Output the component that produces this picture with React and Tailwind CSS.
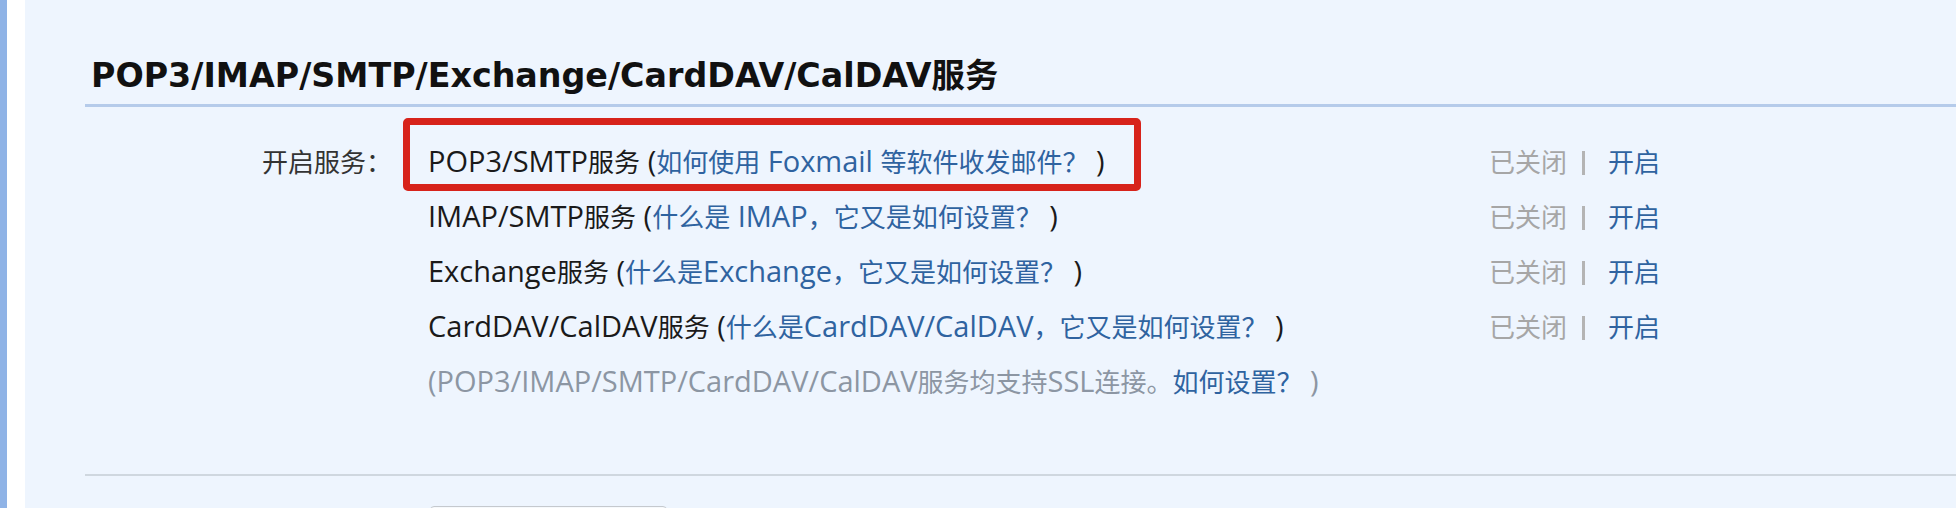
const services = [
  {
    name: "POP3/SMTP服务",
    help: "如何使用 Foxmail 等软件收发邮件？",
  },
  {
    name: "IMAP/SMTP服务",
    help: "什么是 IMAP，它又是如何设置？",
  },
  {
    name: "Exchange服务",
    help: "什么是Exchange，它又是如何设置？",
  },
  {
    name: "CardDAV/CalDAV服务",
    help: "什么是CardDAV/CalDAV，它又是如何设置？",
  },
];

// latin runs get a slightly bigger humanist face, like YaHei's Segoe part
const Mixed = ({ text }) =>
  text
    .split(/([\x20-\x7E]+)/)
    .filter(Boolean)
    .map((part, i) =>
      /^[\x20-\x7E]+$/.test(part) ? (
        <span key={i} className="font-['Open_Sans',sans-serif] text-[29px]">
          {part}
        </span>
      ) : (
        <span key={i}>{part}</span>
      )
    );

const App = () => {
  return (
    <div className="flex w-[1956px] h-[508px] overflow-hidden bg-[#eef5fe] text-[26px] font-['Noto_Sans_CJK_SC',sans-serif]">
      {/* left rail */}
      <div className="w-[7px] shrink-0 bg-[#8fb3e6]" />
      <div className="w-[18px] shrink-0 bg-white" />

      <div className="flex-1 pl-[60px]">
        {/* section title */}
        <div className="pt-[56px] pb-[8px] border-b-[3px] border-[#b5cbea]">
          <h2 className="pl-[6px] text-[33.3px] leading-[40px] font-bold text-[#111] font-['DejaVu_Sans','Noto_Sans_CJK_SC',sans-serif]">
            POP3/IMAP/SMTP/Exchange/CardDAV/CalDAV服务
          </h2>
        </div>

        <div className="relative mt-[26px]">
          {services.map((s, i) => (
            <div key={s.name} className="flex items-center h-[55px]">
              <div className="w-[307px] shrink-0 text-right text-[#333] leading-none">
                {i === 0 ? "开启服务：" : ""}
              </div>
              <div className="w-[1097px] shrink-0 pl-[36px] text-[#1a1a1a] whitespace-nowrap leading-none">
                <Mixed text={s.name + " ("} />
                <span className="text-[#2f63a0]">
                  <Mixed text={s.help} />
                </span>
                <Mixed text=" )" />
              </div>
              <div className="flex items-center whitespace-nowrap leading-none">
                <span className="text-[#a6a6a6]">已关闭</span>
                <div className="ml-[15px] mr-[23px] w-[3px] h-[24px] translate-y-[2px] bg-[#b4b4b4]" />
                <span className="text-[#2f63a0]">开启</span>
              </div>
            </div>
          ))}
          <div className="flex items-center h-[55px]">
            <div className="w-[307px] shrink-0" />
            <div className="pl-[36px] text-[#8c96a3] whitespace-nowrap leading-none">
              <Mixed text="(POP3/IMAP/SMTP/CardDAV/CalDAV服务均支持SSL连接。" />
              <span className="text-[#2f63a0]">如何设置？</span>
              <Mixed text=" )" />
            </div>
          </div>

          {/* highlight box */}
          <div className="absolute top-[-15px] left-[318px] w-[738px] h-[73px] border-[7px] border-[#d7231b] rounded-[5px]" />
        </div>

        <div className="mt-[66px] border-t-2 border-[#cfd7df]" />

        <div className="mt-[30px] ml-[345px] w-[237px] h-[40px] rounded-[4px] border border-[#c5c9ce] bg-[#f6f9fc]" />
      </div>
    </div>
  );
};

export default App;
